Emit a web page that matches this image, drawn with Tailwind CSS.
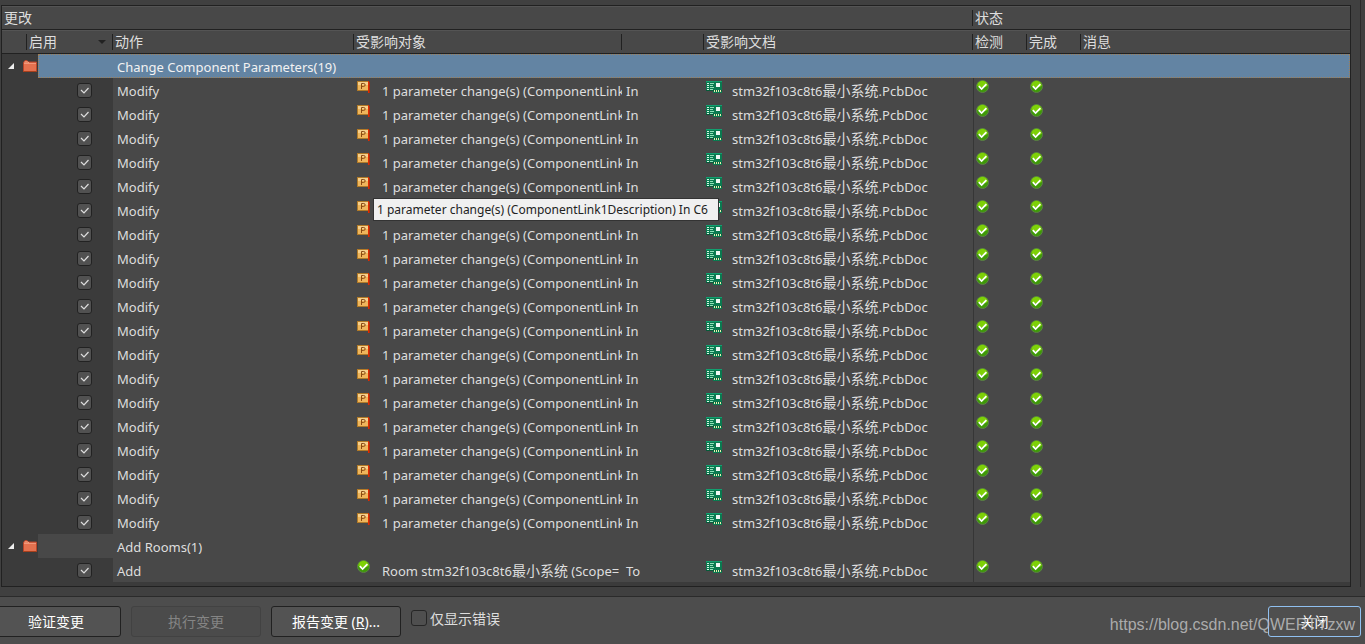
<!DOCTYPE html>
<html lang="zh-CN">
<head>
<meta charset="utf-8">
<title>工程变更指令</title>
<script src="https://cdn.jsdelivr.net/npm/@tailwindcss/browser@4"></script>
</head>
<body class="flex min-h-screen flex-col overflow-hidden bg-[#4d4d4d] font-['Noto_Sans','Noto_Sans_CJK_SC',sans-serif] text-[13px] leading-5 text-[#dedede]">
<svg class="hidden">
  <symbol id="folder" viewBox="0 0 14 13">
    <path d="M.5 11.500V2.500L2 .5h2l1.500 1.500h8v9.500z" fill="#e4714f" stroke="#b8452a"/>
    <path d="M1 3.500h12" stroke="#f0977a"/><path d="M1.500 2h3.500l1 1" stroke="#f0a080" fill="none"/>
    <path d="M.5 11.500h13" stroke="#a8401c"/>
  </symbol>
  <symbol id="param" viewBox="0 0 13 12">
    <path d="M0 0h12v10H0z" fill="#b07a28"/><path d="M1 1h10v8H1z" fill="#efb65c"/><path d="M1 1h10v3H1z" fill="#f6d08c"/>
    <path d="M4.500 8V2.500h2.200a1.400 1.400 0 0 1 0 2.900H4.500" fill="none" stroke="#8a4a12"/>
    <path d="M11 0h1v12h-1z" fill="#e02a00"/><path d="M12 1h1v11h-1z" fill="#a83010"/>
  </symbol>
  <symbol id="pcb" viewBox="0 0 16 12">
    <path d="M0 0h16v12H7v-2H0z" fill="#0a7a50"/><path d="M0 0h16v1H0z" fill="#12a070"/><path d="M0 9h16v1H0z" fill="#075a3a"/>
    <path d="M1 2h2v1H1zM1 4h2v1H1zM1 6h2v1H1zM1 8h2v1H1z" fill="#d8f5e4"/>
    <path d="M4 2h4v1H4zM4 4h3v1H4zM4 6h4v1H4zM4 8h3v1H4z" fill="#8fe0b8"/>
    <path d="M10 2h4v4h-4z" fill="#f0f8f4"/>
    <path d="M8 9h1v2H8zM10 9h1v2h-1zM12 9h1v2h-1zM14 9h1v2h-1z" fill="#e8efb0"/>
  </symbol>
  <symbol id="ok" viewBox="0 0 13 13">
    <circle cx="6.500" cy="6.500" r="6" fill="#3f9a08" stroke="#5c8048"/>
    <path d="M1.200 6a5.300 5.300 0 0 1 10.600 0q-5.300 2.500-10.600 0z" fill="#7ed008"/>
    <path d="M2.800 6.200l2.800 2.900L10.400 4.100" fill="none" stroke="#fff" stroke-width="1.700"/>
  </symbol>
</svg>

<main class="border-b border-[#2b2b2b] bg-[#404040] pb-[9px]">
  <div class="mr-[4px] border-r border-[#2b2b2b] pt-[5px] pr-[9px] pl-px">
    <div class="relative border border-[#212121] bg-[#3b3b3b] pb-1">
      <table class="w-full table-fixed border-separate border-spacing-0 text-left">
        <colgroup>
          <col class="w-9"><col class="w-[75px]"><col class="w-[241px]"><col class="w-[268px]"><col class="w-[82px]"><col class="w-[269px]"><col class="w-[54px]"><col class="w-[54px]"><col>
        </colgroup>
        <thead class="bg-[#484848] text-sm leading-4">
          <tr class="h-6">
            <th colspan="6" class="border-t border-b border-t-[#545454] border-b-[#212121] p-0 pl-[2px] font-normal">更改</th>
            <th colspan="3" class="border-t border-b border-t-[#545454] border-b-[#212121] p-0 font-normal"><div class="-ml-px border-l border-[#212121] pl-[2px]">状态</div></th>
          </tr>
          <tr class="h-6">
            <th colspan="2" class="border-t border-b border-t-[#545454] border-b-[#212121] p-0 font-normal"><div class="ml-6 flex items-center justify-between border-l border-[#212121] pr-[7px] pl-[2px]">启用<svg class="h-1 w-2" viewBox="0 0 8 4"><path d="M0 0h8L4 4z" fill="#222"/></svg></div></th>
            <th class="border-t border-b border-t-[#545454] border-b-[#212121] p-0 font-normal"><div class="-ml-px border-l border-[#212121] pl-[2px]">动作</div></th>
            <th class="border-t border-b border-t-[#545454] border-b-[#212121] p-0 font-normal"><div class="-ml-px border-l border-[#212121] pl-[2px]">受影响对象</div></th>
            <th class="border-t border-b border-t-[#545454] border-b-[#212121] p-0 font-normal"><div class="-ml-px h-4 border-l border-[#212121]"></div></th>
            <th class="border-t border-b border-t-[#545454] border-b-[#212121] p-0 font-normal"><div class="-ml-px border-l border-[#212121] pl-[2px]">受影响文档</div></th>
            <th class="border-t border-b border-t-[#545454] border-b-[#212121] p-0 font-normal"><div class="-ml-px border-l border-[#212121] pl-[2px]">检测</div></th>
            <th class="border-t border-b border-t-[#545454] border-b-[#212121] p-0 font-normal"><div class="-ml-px border-l border-[#212121] pl-[2px]">完成</div></th>
            <th class="border-t border-b border-t-[#545454] border-b-[#212121] p-0 font-normal"><div class="-ml-px border-l border-[#212121] pl-[2px]">消息</div></th>
          </tr>
        </thead>
        <tbody id="rows"></tbody>
      </table>
      <div role="tooltip" class="absolute top-48 left-[371px] min-w-[346px] border border-[#333] bg-[#f0f0f0] px-[3px] pt-px text-xs leading-5 whitespace-nowrap text-[#222]">1 parameter change(s) (ComponentLink1Description) In C6</div>
    </div>
  </div>
</main>

<footer class="relative flex flex-1 items-start gap-[10px] pt-[9px] pr-1 pb-[7px] text-sm leading-5">
  <button class="-ml-[9px] h-[31px] w-[130px] rounded-[3px] border border-[#212121] bg-[#535353] text-white">验证变更</button>
  <button disabled class="h-[31px] w-[130px] rounded-[3px] border border-[#424242] bg-[#4b4b4b] text-[#858585]">执行变更</button>
  <button class="h-[31px] w-[130px] rounded-[3px] border border-[#212121] bg-[#535353] text-white">报告变更 (<u>R</u>)...</button>
  <label class="flex items-start gap-[3px] pt-1 leading-[18px]"><input type="checkbox" class="size-4 appearance-none rounded-[3px] border border-[#262626] bg-[#4f4f4f]"><span>仅显示错误</span></label>
  <button class="ml-auto h-[31px] w-[93px] rounded-[3px] border border-[#90c0f0] bg-[#4f4f4f] text-white">关闭</button>
  <div class="pointer-events-none absolute top-4 right-[10px] font-['Liberation_Sans',sans-serif] text-base text-[#b8b8b8]/90">https://blog.csdn.net/QWERTYzxw</div>
</footer>

<script>
const icon = (id, cls) => `<svg class="${cls}"><use href="#${id}"/></svg>`;
const ok = icon('ok', 'ml-[2px] h-[13px] w-[13px]');
const project = `stm32f103c8t6<span class="text-sm leading-5">最小系统</span>`;
const group = (title, selected) => `
  <tr class="h-6">
    <td class="p-0"><div class="flex items-center gap-[9px] pl-[6px]"><svg class="h-[6px] w-[6px]" viewBox="0 0 6 6"><path d="M6 0v6H0z" fill="#eee"/></svg>${icon('folder', 'h-[13px] w-[14px]')}</div></td>
    ${selected
      ? `<td colspan="8" class="border border-dotted border-[#a08058] bg-[#6384a3] p-0 pt-[2px] pl-[78px] text-[#f2f2f2]">${title}</td>`
      : `<td class="bg-[#484848] p-0"></td><td class="bg-[#484848] p-0 pt-[2px] pl-1">${title}</td><td colspan="3" class="bg-[#484848] p-0"></td><td colspan="3" class="border-l border-[#363636] bg-[#484848] p-0"></td>`}
  </tr>`;
const change = (action, object, prep) => `
  <tr class="h-6">
    <td class="p-0"></td>
    <td class="p-0"><label class="relative ml-[39px] block size-[15px]"><input type="checkbox" checked aria-label="${action}" class="peer block size-[15px] appearance-none rounded-[3px] border border-[#222] bg-[#515151]"><svg class="pointer-events-none invisible absolute inset-0 size-[15px] peer-checked:visible" viewBox="0 0 15 15"><path d="M4 7l3 3 4.500-5" fill="none" stroke="#ddd" stroke-width="1.200"/></svg></label></td>
    <td class="bg-[#484848] p-0 pt-[2px] pl-1">${action}</td>
    <td class="bg-[#484848] p-0"><div class="flex h-6 items-start overflow-hidden whitespace-nowrap">${object}</div></td>
    <td class="bg-[#484848] p-0 pt-[2px] pl-1">${prep}</td>
    <td class="bg-[#484848] p-0"><div class="flex h-6 items-start gap-[10px] pl-[2px]">${icon('pcb', 'mt-[3px] h-3 w-4')}<span class="pt-[3px]">${project}.PcbDoc</span></div></td>
    <td class="border-l border-[#363636] bg-[#484848] p-0 pt-[2px] align-top">${ok}</td>
    <td class="bg-[#484848] p-0 pt-[2px] pl-px align-top">${ok}</td>
    <td class="bg-[#484848] p-0"></td>
  </tr>`;
const param = icon('param', 'mt-[3px] mr-[12px] ml-[3px] h-3 w-[13px] shrink-0') + `<span class="pt-[3px]">1 parameter change(s) (ComponentLink</span>`;
const room = icon('ok', 'mt-[2px] mr-[12px] ml-[3px] h-[13px] w-[13px] shrink-0') + `<span class="pt-[3px]">Room ${project} (Scope=</span>`;
let html = group('Change Component Parameters(19)', true);
for (let i = 0; i < 19; i++) html += change('Modify', param, 'In');
html += group('Add Rooms(1)', false) + change('Add', room, 'To');
document.getElementById('rows').innerHTML = html;
</script>
</body>
</html>
